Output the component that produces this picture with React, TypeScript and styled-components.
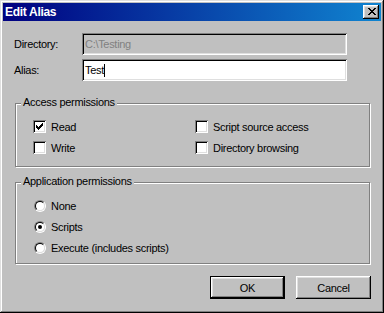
import React from "react";
import styled, { createGlobalStyle } from "styled-components";

const Global = createGlobalStyle`
  html, body { margin: 0; padding: 0; background: #c0c0c0; }
  body { font-family: "Liberation Sans", Arial, sans-serif; font-size: 11px; }
  * { box-sizing: border-box; }
`;

const Window = styled.div`
  width: 384px;
  height: 313px;
  background: #c0c0c0;
  padding: 3px;
  display: flex;
  flex-direction: column;
  color: #000;
  letter-spacing: -0.3px;
  box-shadow: inset -1px -1px #000, inset 1px 1px #dfdfdf, inset -2px -2px #808080,
    inset 2px 2px #fff;
`;

const TitleBar = styled.div`
  height: 18px;
  flex: none;
  display: flex;
  align-items: center;
  justify-content: space-between;
  padding: 0 2px 0 2px;
  background: linear-gradient(to right, #000080, #1084d0);
`;

const Title = styled.span`
  color: #fff;
  font-weight: bold;
  font-size: 12px;
  letter-spacing: -0.3px;
`;

const CloseButton = styled.div`
  width: 16px;
  height: 14px;
  background: #c0c0c0;
  padding: 3px 0 0 5px;
  box-shadow: inset -1px -1px #000, inset 1px 1px #fff, inset -2px -2px #808080,
    inset 2px 2px #dfdfdf;
  svg { display: block; }
`;

const Body = styled.div`
  flex: 1;
  display: flex;
  flex-direction: column;
  padding: 12px 11px 0 12px;
`;

const Fields = styled.div`
  display: flex;
  flex-direction: column;
  gap: 4px;
`;

const FieldRow = styled.div`
  display: grid;
  grid-template-columns: 67px 265px;
  align-items: center;
  height: 22px;
`;

const FieldLabel = styled.span`
  margin-left: -1px;
`;

const TextBox = styled.div<{ $disabled?: boolean }>`
  height: 22px;
  display: flex;
  align-items: center;
  padding: 0 3px;
  background: ${(p) => (p.$disabled ? "#c0c0c0" : "#fff")};
  color: ${(p) => (p.$disabled ? "#808080" : "#000")};
  box-shadow: inset 1px 1px #808080, inset -1px -1px #fff, inset 2px 2px #000,
    inset -2px -2px #dfdfdf;
`;

const Caret = styled.span`
  display: inline-block;
  width: 1px;
  height: 13px;
  background: #000;
`;

const Group = styled.div<{ $h: number; $mt: number }>`
  position: relative;
  height: ${(p) => p.$h}px;
  margin-top: ${(p) => p.$mt}px;
  border: 1px solid #808080;
  box-shadow: inset 1px 1px #fff, 1px 1px #fff;
`;

const Legend = styled.span`
  position: absolute;
  top: -8px;
  left: 5px;
  padding: 0 2px;
  line-height: 13px;
  background: #c0c0c0;
`;

const CheckGrid = styled.div`
  display: grid;
  grid-template-columns: 162px 1fr;
  grid-auto-rows: 21px;
  padding: 12px 0 0 17px;
`;

const RadioList = styled.div`
  display: grid;
  grid-auto-rows: 21px;
  padding: 12px 0 0 18px;
`;

const Option = styled.label`
  display: flex;
  align-items: center;
  gap: 5px;
`;

const CheckBox = styled.span`
  width: 13px;
  height: 13px;
  flex: none;
  background: #fff;
  display: flex;
  align-items: center;
  justify-content: center;
  box-shadow: inset 1px 1px #808080, inset -1px -1px #fff, inset 2px 2px #000,
    inset -2px -2px #dfdfdf;
  svg { display: block; }
`;

const RadioOuter = styled.span`
  width: 12px;
  height: 12px;
  flex: none;
  border-radius: 50%;
  border: 1px solid;
  border-color: #808080 #fff #fff #808080;
  display: flex;
`;

const RadioInner = styled.span`
  flex: 1;
  border-radius: 50%;
  border: 1px solid;
  border-color: #000 #dfdfdf #dfdfdf #000;
  background: #fff;
  display: flex;
  align-items: center;
  justify-content: center;
`;

const RadioDot = styled.span`
  width: 4px;
  height: 4px;
  border-radius: 50%;
  background: #000;
`;

const ButtonRow = styled.div`
  display: flex;
  justify-content: flex-end;
  gap: 11px;
  margin-top: 12px;
  margin-right: -1px;
`;

const Button = styled.button<{ $default?: boolean }>`
  width: 75px;
  height: 23px;
  border: none;
  padding: 0;
  background: #c0c0c0;
  font-family: inherit;
  font-size: 11px;
  letter-spacing: -0.3px;
  color: #000;
  box-shadow: ${(p) =>
    p.$default
      ? "inset 0 0 0 1px #000, inset -2px -2px #000, inset 2px 2px #fff, inset -3px -3px #808080, inset 3px 3px #dfdfdf"
      : "inset -1px -1px #000, inset 1px 1px #fff, inset -2px -2px #808080, inset 2px 2px #dfdfdf"};
`;

const pixels = (rows: string[]) =>
  rows.flatMap((r, y) =>
    r.split("").map((c, x) => (c === "X" ? <rect key={`${x}-${y}`} x={x} y={y} width={1} height={1} /> : null))
  );

const CloseGlyph = () => (
  <svg width="8" height="7" viewBox="0 0 8 7" shapeRendering="crispEdges" fill="#000">
    {pixels(["XX....XX", ".XX..XX.", "..XXXX..", "...XX...", "..XXXX..", ".XX..XX.", "XX....XX"])}
  </svg>
);

const CheckGlyph = () => (
  <svg width="7" height="7" viewBox="0 0 7 7" shapeRendering="crispEdges" fill="#000">
    {pixels(["......X", ".....XX", "X...XXX", "XX.XXX.", "XXXXX..", ".XXX...", "..X...."])}
  </svg>
);

const Check = ({ checked, label }: { checked?: boolean; label: string }) => (
  <Option>
    <CheckBox>{checked && <CheckGlyph />}</CheckBox>
    <span>{label}</span>
  </Option>
);

const Radio = ({ checked, label }: { checked?: boolean; label: string }) => (
  <Option>
    <RadioOuter>
      <RadioInner>{checked && <RadioDot />}</RadioInner>
    </RadioOuter>
    <span>{label}</span>
  </Option>
);

export default function App() {
  return (
    <>
      <Global />
      <Window>
        <TitleBar>
          <Title>Edit Alias</Title>
          <CloseButton>
            <CloseGlyph />
          </CloseButton>
        </TitleBar>
        <Body>
          <Fields>
            <FieldRow>
              <FieldLabel>Directory:</FieldLabel>
              <TextBox $disabled>C:\Testing</TextBox>
            </FieldRow>
            <FieldRow>
              <FieldLabel>Alias:</FieldLabel>
              <TextBox>
                Test
                <Caret />
              </TextBox>
            </FieldRow>
          </Fields>
          <Group $h={64} $mt={22}>
            <Legend>Access permissions</Legend>
            <CheckGrid>
              <Check checked label="Read" />
              <Check label="Script source access" />
              <Check label="Write" />
              <Check label="Directory browsing" />
            </CheckGrid>
          </Group>
          <Group $h={82} $mt={15}>
            <Legend>Application permissions</Legend>
            <RadioList>
              <Radio label="None" />
              <Radio checked label="Scripts" />
              <Radio label="Execute (includes scripts)" />
            </RadioList>
          </Group>
          <ButtonRow>
            <Button $default>OK</Button>
            <Button>Cancel</Button>
          </ButtonRow>
        </Body>
      </Window>
    </>
  );
}
